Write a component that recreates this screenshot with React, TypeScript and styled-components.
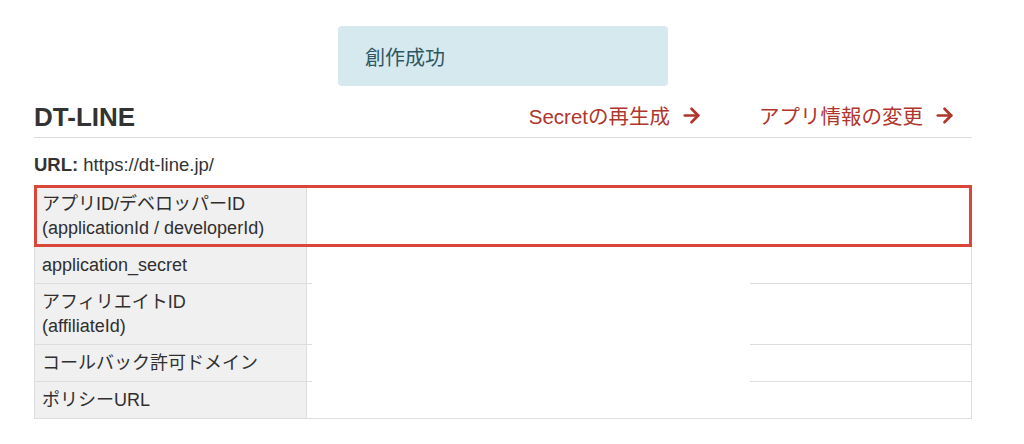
import * as React from "react";
import styled, { createGlobalStyle } from "styled-components";
import { ArrowRight } from "lucide-react";

const GlobalStyle = createGlobalStyle`
  body {
    margin: 0;
    background: #ffffff;
    font-family: "Liberation Sans", "Noto Sans CJK JP", sans-serif;
    color: #333333;
  }
`;

const Page = styled.div`
  width: 938px;
  padding: 26px 0 0 34px;
`;

const Alert = styled.div`
  width: 303px;
  height: 60px;
  margin: 0 auto;
  padding-left: 27px;
  display: flex;
  align-items: center;
  background: #d5e9ef;
  border-radius: 4px;
  color: #2e5662;
  font-size: 20px;
`;

const Header = styled.div`
  margin-top: 12px;
  height: 39px;
  display: flex;
  align-items: center;
  justify-content: space-between;
  border-bottom: 1px solid #dddddd;
`;

const Title = styled.h2`
  margin: 0;
  font-size: 26px;
  font-weight: 700;
  color: #333333;
`;

const Links = styled.div`
  display: flex;
  gap: 56px;
  padding-right: 16px;
  padding-bottom: 5px;
`;

const ActionLink = styled.a`
  display: flex;
  align-items: center;
  gap: 10px;
  color: #b0352b;
  font-size: 20.5px;
  text-decoration: none;
`;

const UrlLine = styled.div`
  margin-top: 15px;
  line-height: 24px;
  font-size: 18.5px;
  color: #333333;

  b {
    font-weight: 700;
  }
`;

const Table = styled.div`
  margin-top: 8px;
  display: flex;
  flex-direction: column;
`;

const Row = styled.div<{ $highlight?: boolean }>`
  position: relative;
  display: grid;
  grid-template-columns: 273px 1fr;

  &::after {
    content: "";
    display: ${(p) => (p.$highlight ? "block" : "none")};
    position: absolute;
    inset: 0;
    border: 3px solid #d9473a;
    pointer-events: none;
    z-index: 1;
  }
`;

const Label = styled.div<{ $first?: boolean }>`
  background: #f0f0f0;
  border: 1px solid #dddddd;
  border-top: ${(p) => (p.$first ? "1px solid #dddddd" : "none")};
  padding: 6px 7px;
  line-height: 24px;
  font-size: 18px;
  color: #2f2f2f;
`;

const Value = styled.div<{ $first?: boolean; $mask?: "inner" | "last" }>`
  position: relative;
  background: #ffffff;
  border-right: 1px solid #dddddd;
  border-bottom: 1px solid #dddddd;
  border-top: ${(p) => (p.$first ? "1px solid #dddddd" : "none")};

  &::before {
    content: "";
    display: ${(p) => (p.$mask ? "block" : "none")};
    position: absolute;
    left: 5px;
    width: 438px;
    top: 0;
    bottom: ${(p) => (p.$mask === "inner" ? "-1px" : "0")};
    background: #ffffff;
  }
`;

const rows: { label: string[]; mask?: "inner" | "last" }[] = [
  { label: ["アプリID/デベロッパーID", "(applicationId / developerId)"] },
  { label: ["application_secret"], mask: "inner" },
  { label: ["アフィリエイトID", "(affiliateId)"], mask: "inner" },
  { label: ["コールバック許可ドメイン"], mask: "inner" },
  { label: ["ポリシーURL"], mask: "last" },
];

export default function App() {
  return (
    <>
      <GlobalStyle />
      <Page>
        <Alert>創作成功</Alert>
        <Header>
          <Title>DT-LINE</Title>
          <Links>
            <ActionLink href="#">
              Secretの再生成
              <ArrowRight size={23} strokeWidth={2.8} />
            </ActionLink>
            <ActionLink href="#">
              アプリ情報の変更
              <ArrowRight size={23} strokeWidth={2.8} />
            </ActionLink>
          </Links>
        </Header>
        <UrlLine>
          <b>URL:</b> https://dt-line.jp/
        </UrlLine>
        <Table>
          {rows.map((r, i) => (
            <Row key={i} $highlight={i === 0}>
              <Label $first={i === 0}>
                {r.label.map((l, j) => (
                  <div key={j}>{l}</div>
                ))}
              </Label>
              <Value $first={i === 0} $mask={r.mask} />
            </Row>
          ))}
        </Table>
      </Page>
    </>
  );
}
